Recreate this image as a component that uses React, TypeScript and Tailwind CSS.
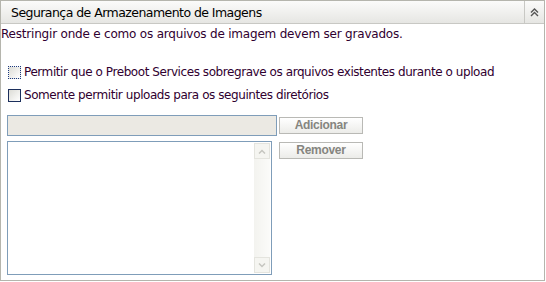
import React from 'react';

const font = { fontFamily: '"DejaVu Sans", Verdana, sans-serif' };
const btnFont = { fontFamily: '"Liberation Sans", Arial, sans-serif', fontWeight: 'bold' as const };

const App: React.FC = () => {
  return (
    <div className="w-[546px] h-[282px] bg-white" style={font}>
      <div className="w-[545px] h-[281px] border border-[#b5b5ad] flex flex-col">
        {/* header */}
        <div className="h-[23px] flex border-b border-[#c8c8c4] bg-gradient-to-b from-[#fbfbfa] to-[#e6e6e3]">
          <div className="flex-1 pl-[10px] text-[12.5px] leading-[23px] text-black tracking-[-0.55px]">
            Segurança de Armazenamento de Imagens
          </div>
          <div className="w-[20px] border-l border-[#c8c8c4] flex items-center justify-center">
            <svg width="9" height="9" viewBox="0 0 9 9" fill="none" stroke="#555" strokeWidth="1.4">
              <path d="M1 4.5 L4.5 1 L8 4.5" />
              <path d="M1 8 L4.5 4.5 L8 8" />
            </svg>
          </div>
        </div>

        <div className="text-[12px] leading-[18px] text-[#300030] tracking-[-0.2px] pt-[1px]">
          Restringir onde e como os arquivos de imagem devem ser gravados.
        </div>

        <div className="mt-[20px] pl-[7px] flex flex-col gap-[5px] text-[12px] text-[#300030] tracking-[-0.43px]">
          <label className="flex items-center gap-[3px] h-[18px]">
            <span className="w-[13px] h-[13px] border border-dotted border-[#1c3a80] bg-gradient-to-br from-[#dcdcd6] to-white" />
            Permitir que o Preboot Services sobregrave os arquivos existentes durante o upload
          </label>
          <label className="flex items-center gap-[3px] h-[18px]">
            <span className="w-[13px] h-[13px] border border-[#1c2f5c] bg-gradient-to-br from-[#dcdcd6] to-white" />
            Somente permitir uploads para os seguintes diretórios
          </label>
        </div>

        <div className="mt-[11px] pl-[6px] flex">
          <div className="flex flex-col gap-[5px]">
            <div className="w-[270px] h-[21px] border border-[#7f9db9] bg-[#ebe9e3]" />
            <div className="w-[265px] h-[134px] border border-[#7f9db9] bg-white flex justify-end p-[1px]">
              <div className="w-[16px] flex flex-col justify-between bg-gradient-to-r from-[#f3f3ef] to-[#fbfbf9]">
                <div className="h-[16px] border border-[#e4e4de] bg-[#f5f5f1] flex items-center justify-center">
                  <svg width="8" height="5" viewBox="0 0 8 5" fill="none" stroke="#c6c6c0" strokeWidth="1.5">
                    <path d="M1 4.5 L4 1.5 L7 4.5" />
                  </svg>
                </div>
                <div className="h-[16px] border border-[#e4e4de] bg-[#f5f5f1] flex items-center justify-center">
                  <svg width="8" height="5" viewBox="0 0 8 5" fill="none" stroke="#c6c6c0" strokeWidth="1.5">
                    <path d="M1 0.5 L4 3.5 L7 0.5" />
                  </svg>
                </div>
              </div>
            </div>
          </div>
          <div className="flex flex-col gap-[8px] pt-[2px] pl-[2px]">
            <button className="w-[84px] h-[17px] border border-[#b9b9b5] bg-gradient-to-b from-white to-[#ecece9] text-[12px] leading-[15px] text-[#85857f] tracking-[-0.3px]" style={btnFont}>
              Adicionar
            </button>
            <button className="w-[84px] h-[17px] border border-[#b9b9b5] bg-gradient-to-b from-white to-[#ecece9] text-[12px] leading-[15px] text-[#85857f] tracking-[-0.3px]" style={btnFont}>
              Remover
            </button>
          </div>
        </div>
      </div>
    </div>
  );
};

export default App;
